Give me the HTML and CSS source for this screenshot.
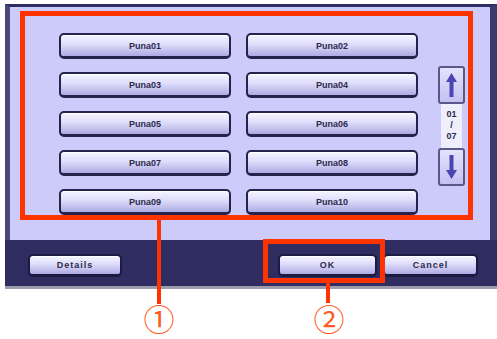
FILE: index.html
```html
<html lang="en">
<head>
<meta charset="UTF-8">
<meta name="viewport" content="width=device-width, initial-scale=1.0">
<title>Select Destination</title>
<link rel="stylesheet" href="styles.css">
</head>
<body>
<div class="device">
  <div class="panel">
    <div class="list">
      <div class="grid">
        <button class="key">Puna01</button>
        <button class="key">Puna02</button>
        <button class="key">Puna03</button>
        <button class="key">Puna04</button>
        <button class="key">Puna05</button>
        <button class="key">Puna06</button>
        <button class="key">Puna07</button>
        <button class="key">Puna08</button>
        <button class="key">Puna09</button>
        <button class="key">Puna10</button>
      </div>
      <div class="scroller">
        <button class="arrow">
          <svg width="13" height="28" viewBox="0 0 13 28"><path d="M6.5 2 L12 11 L8.5 11 L8.5 26 L4.5 26 L4.5 11 L1 11 Z" fill="#4c44b4"/></svg>
        </button>
        <div class="count">01<br>/<br>07</div>
        <button class="arrow">
          <svg width="13" height="28" viewBox="0 0 13 28"><path d="M6.5 26 L12 17 L8.5 17 L8.5 2 L4.5 2 L4.5 17 L1 17 Z" fill="#4c44b4"/></svg>
        </button>
      </div>
    </div>
  </div>
  <div class="bar">
    <button class="key small details">Details</button>
    <button class="key small ok">OK</button>
    <button class="key small cancel">Cancel</button>
  </div>
</div>

<div class="mark box-ok"></div>
<div class="mark line-one"></div>
<div class="mark line-two"></div>
<div class="callout callout-one">①</div>
<div class="callout callout-two">②</div>
</body>
</html>
```

FILE: styles.css
```css
body {
  margin: 0;
  background: white;
  font-family: "Liberation Sans", Arial, sans-serif;
}
.device {
  margin: 4px 0 0 5px;
  width: 492px;
}
.panel {
  background: #cdcbf9;
  border-top: 3px solid #2e2c62;
  border-left: 5px solid #4a4878;
  border-right: 7px solid #3c3a6c;
  padding: 4px 0 20px 10px;
}
.list {
  box-sizing: border-box;
  width: 453px;
  height: 209px;
  border: 5px solid #ff3300;
  padding: 17px 0 0 34px;
  display: flex;
}
.grid {
  display: grid;
  grid-template-columns: 172px 172px;
  grid-auto-rows: 26px;
  column-gap: 15px;
  row-gap: 13px;
}
.key {
  background: linear-gradient(#f6f5ff, #dedcfa 45%, #aeaae4);
  border: 2px solid #25234a;
  border-bottom-width: 3px;
  border-radius: 5px;
  color: #2c2a4c;
  font-family: "Liberation Sans", Arial, sans-serif;
  font-size: 9px;
  font-weight: bold;
  padding: 0;
  box-shadow: inset 0 1px 0 #ffffff;
}
.scroller {
  margin: 33px 0 0 20px;
  width: 27px;
  display: flex;
  flex-direction: column;
}
.arrow {
  height: 38px;
  padding: 0;
  background: linear-gradient(#e4e2fc, #c4c1f2);
  border: 2px solid #5a5888;
  border-radius: 3px;
  display: flex;
  align-items: center;
  justify-content: center;
}
.count {
  height: 44px;
  margin: 0 3px;
  background: #eeeefc;
  color: #2c2a4c;
  font-size: 9px;
  font-weight: bold;
  line-height: 11px;
  text-align: center;
  padding-top: 5px;
  box-sizing: border-box;
}
.bar {
  background: #2e2c60;
  border-bottom: 3px solid #9c9cac;
  display: flex;
  align-items: flex-start;
  padding: 14px 0 0 23px;
  box-sizing: border-box;
  height: 49px;
}
.small {
  height: 23px;
  letter-spacing: 1px;
  border-color: #1c1a40;
}
.details {
  width: 94px;
}
.ok {
  width: 99px;
  margin-left: 156px;
}
.cancel {
  width: 95px;
  margin-left: 6px;
}
.mark {
  position: absolute;
  background: #ff3300;
}
.box-ok {
  left: 263px;
  top: 239px;
  width: 112px;
  height: 34px;
  background: none;
  border: 5px solid #ff3300;
}
.line-one {
  left: 157px;
  top: 220px;
  width: 4px;
  height: 84px;
}
.line-two {
  left: 326px;
  top: 283px;
  width: 4px;
  height: 20px;
}
.callout {
  position: absolute;
  width: 40px;
  text-align: center;
  color: #ff5a1e;
  font-family: "Noto Sans CJK JP", sans-serif;
  font-size: 31px;
  line-height: 34px;
  top: 301px;
}
.callout-one {
  left: 139px;
}
.callout-two {
  left: 309px;
}
```
